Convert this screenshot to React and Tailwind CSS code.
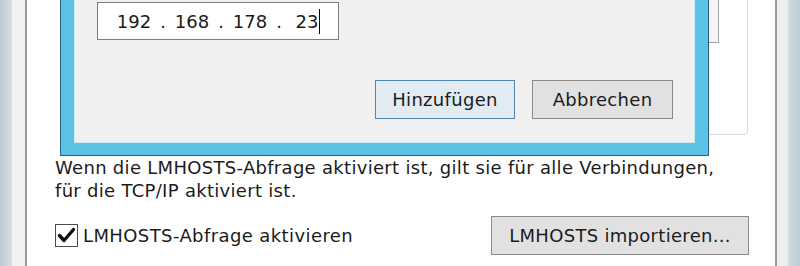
import React from 'react';

// Eigenschaften-Seite mit modalem Dialog "TCP/IP-WINS-Server" (Ausschnitt)
function IpField({ value, cursor }) {
  return <div className="w-[40px] flex items-center justify-center">
      <span>{value}</span>
      {cursor && <span className="inline-block w-px h-[25px] bg-black ml-[1px]" />}
    </div>;
}

function IpDot() {
  return <div className="w-[18px] text-center">.</div>;
}

function WinButton({ children, isDefault, className = '' }) {
  const tone = isDefault ? 'border-[#4f87b5] bg-[#e2ebf2]' : 'border-[#8a8a8a] bg-[#e1e1e1]';
  return <button className={`h-[39px] flex items-center justify-center border ${tone} ${className}`}>
      {children}
    </button>;
}

export default function App() {
  return <div className="w-[800px] h-[266px] overflow-hidden flex bg-white text-[18px] tracking-[0.3px] text-[#1b1b1b] font-['DejaVu_Sans',sans-serif]">
      {/* linker Fensterrand */}
      <div className="w-[12px] bg-gradient-to-r from-[#bccbd5] to-[#d6dfe5]" />
      <div className="w-[15px] bg-[#f3f1f2] border-r-2 border-[#9a9a9a]" />

      {/* Seite */}
      <div className="flex-1 relative flex flex-col pl-[28px] pr-[27px]">
        {/* Gruppenfeld hinter dem Dialog */}
        <div className="h-[146px] -mt-[11px] ml-[12px] border border-[#d9d9d9] rounded-[4px] flex flex-col">
          <div className="mt-[6px] h-[47px] ml-[20px] mr-[28px] border border-[#a3a3a3] bg-[#f4f4f4]" />
        </div>

        <p className="mt-[21px] leading-[23px]">
          Wenn die LMHOSTS-Abfrage aktiviert ist, gilt sie für alle Verbindungen,<br />
          für die TCP/IP aktiviert ist.
        </p>

        <div className="mt-[14px] h-[39px] flex items-center justify-between">
          <label className="flex items-center gap-[5px] tracking-[0.4px]">
            <svg width="23" height="23" viewBox="0 0 23 23">
              <rect x="0.5" y="0.5" width="22" height="22" fill="#ffffff" stroke="#4a4a4a" />
              <path d="M4.5 11.5 L9 16.5 L18.5 5.5" fill="none" stroke="#111111" strokeWidth="3.4" strokeLinecap="round" strokeLinejoin="round" />
            </svg>
            <span>LMHOSTS-Abfrage aktivieren</span>
          </label>
          <WinButton className="w-[258px] -mr-[1px]">LMHOSTS importieren...</WinButton>
        </div>

        {/* modaler Dialog */}
        <div className="absolute left-[33px] top-[-44px] w-[649px] h-[200px] z-10 border-x border-b border-[#2c5f7e] bg-[#5cc3e6] px-[13px] pb-[12px] flex">
          <div className="flex-1 bg-[#f0f0f0] border border-[#cfe9f5] flex flex-col">
            <div className="mt-[45px] ml-[22px] w-[242px] h-[38px] border border-[#7d7d7d] bg-white flex items-center pl-[16px] tracking-normal">
              <IpField value="192" />
              <IpDot />
              <IpField value="168" />
              <IpDot />
              <IpField value="178" />
              <IpDot />
              <IpField value="23" cursor />
            </div>
            <div className="mt-[40px] mr-[21px] flex justify-end gap-[17px]">
              <WinButton isDefault className="w-[140px]">Hinzufügen</WinButton>
              <WinButton className="w-[141px]">Abbrechen</WinButton>
            </div>
          </div>
        </div>
      </div>

      {/* rechter Fensterrand */}
      <div className="w-[13px] bg-[#eceef0] border-l-2 border-[#9a9a9a]" />
      <div className="w-[12px] bg-gradient-to-r from-[#d3dde3] to-[#bccbd5]" />
    </div>;
}
